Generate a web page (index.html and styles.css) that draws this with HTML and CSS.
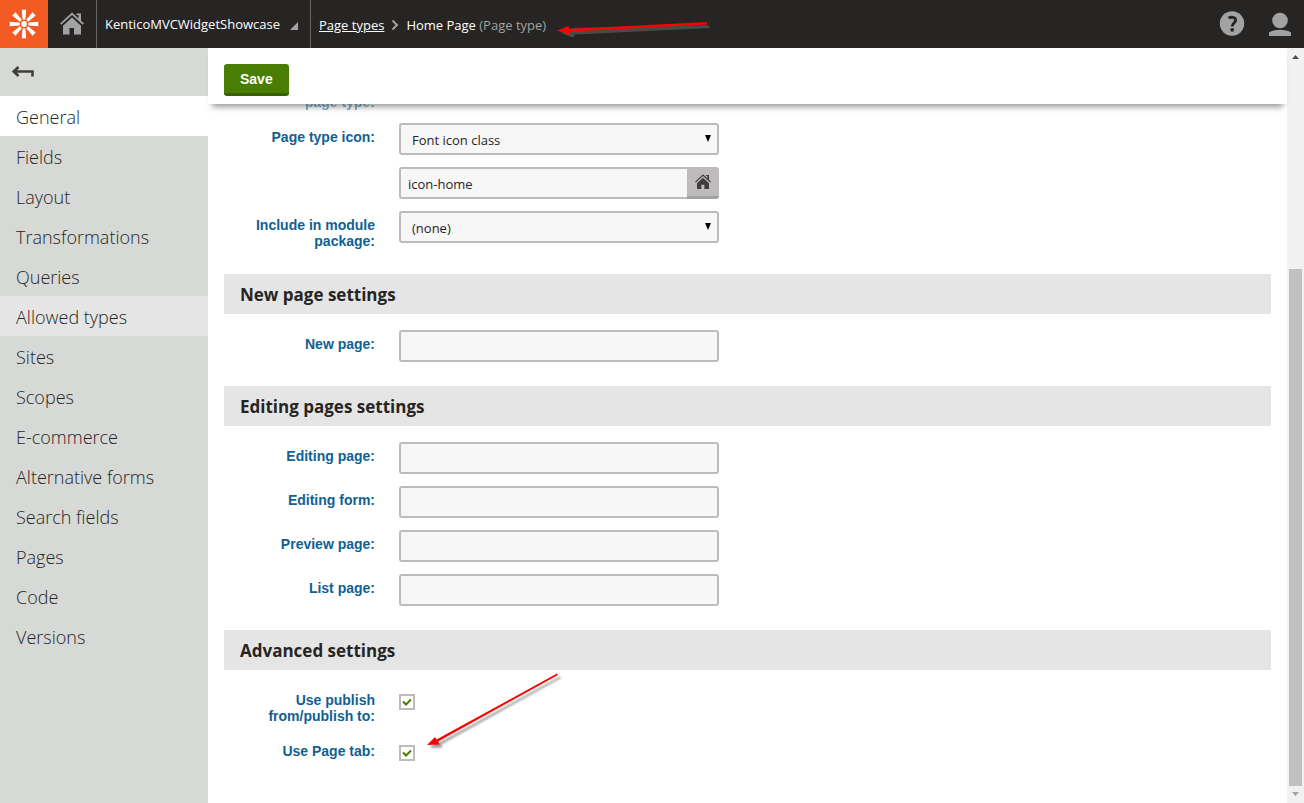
FILE: index.html
```html
<!DOCTYPE html>
<html lang="en">
<head>
    <meta charset="UTF-8">
    <meta name="viewport" content="width=device-width, initial-scale=1.0">
    <title>Home Page (Page type)</title>
    <link rel="stylesheet" href="styles.css">
</head>
<body>
<svg class="symbols">
    <symbol id="home" viewBox="0 0 24 24">
        <path d="M12 0.500 0 11.500 1.200 12.800 12 3 22.800 12.800 24 11.500 21 8.700V1.500H16.500V3H18.500V6.400Z"/>
        <path d="M12 5.500 3 13.800V22.500H9.500V16H14V22.500H21V13.800Z"/>
    </symbol>
</svg>

<header class="header">
    <a class="logo" href="#" aria-label="Kentico">
        <svg viewBox="0 0 48 48" width="48" height="48">
            <g fill="#fff">
                <path id="ray" d="M21.800 9.700h4.400l-.8 9.800h-2.800z"/>
                <use href="#ray" transform="rotate(45 24 24)"/>
                <use href="#ray" transform="rotate(90 24 24)"/>
                <use href="#ray" transform="rotate(135 24 24)"/>
                <use href="#ray" transform="rotate(180 24 24)"/>
                <use href="#ray" transform="rotate(225 24 24)"/>
                <use href="#ray" transform="rotate(270 24 24)"/>
                <use href="#ray" transform="rotate(315 24 24)"/>
            </g>
            <circle cx="24" cy="24" r="2.900" fill="#fff"/>
        </svg>
    </a>
    <a class="home" href="#" aria-label="Dashboard"><svg width="24" height="24"><use href="#home"/></svg></a>
    <button type="button" class="site">KenticoMVCWidgetShowcase
        <svg width="8" height="8" viewBox="0 0 8 8"><path d="M8 0V8H0Z" fill="#a3a2a2"/></svg>
    </button>
    <nav class="breadcrumbs">
        <a href="#">Page types</a>
        <svg width="8" height="12" viewBox="0 0 8 12"><path d="M1.500 1.500 6 6 1.500 10.500" fill="none" stroke="#a3a2a2" stroke-width="2"/></svg>
        <span>Home Page <span class="suffix">(Page type)</span></span>
    </nav>
    <div class="tools">
        <button type="button" class="tool" aria-label="Help">
            <svg width="26" height="26" viewBox="0 0 26 26">
                <circle cx="13" cy="12.500" r="12.200" fill="#a3a2a2"/>
                <path d="M9.600 7.200C11.500 5.800 16.600 5.600 16.600 9.200 16.600 12 13.200 12 13.200 15.500" fill="none" stroke="#262524" stroke-width="2.800"/>
                <circle cx="13.200" cy="18.800" r="1.900" fill="#262524"/>
            </svg>
        </button>
        <button type="button" class="tool" aria-label="User">
            <svg width="24" height="26" viewBox="0 0 24 26" fill="#a3a2a2">
                <circle cx="12" cy="9.500" r="7.800"/>
                <path d="M1 25V21.500C6 17.800 18 17.800 23 21.500V25Z"/>
            </svg>
        </button>
    </div>
</header>

<div class="page">
    <nav class="sidebar">
        <button type="button" class="back" aria-label="Back">
            <svg width="22" height="12" viewBox="0 0 22 12"><path d="M6.500 1 1.700 5.500 6.500 10M2 5.500H20.500V10.500" fill="none" stroke="#403e3d" stroke-width="2.600"/></svg>
        </button>
        <a class="item active" href="#">General</a>
        <a class="item" href="#">Fields</a>
        <a class="item" href="#">Layout</a>
        <a class="item" href="#">Transformations</a>
        <a class="item" href="#">Queries</a>
        <a class="item hover" href="#">Allowed types</a>
        <a class="item" href="#">Sites</a>
        <a class="item" href="#">Scopes</a>
        <a class="item" href="#">E-commerce</a>
        <a class="item" href="#">Alternative forms</a>
        <a class="item" href="#">Search fields</a>
        <a class="item" href="#">Pages</a>
        <a class="item" href="#">Code</a>
        <a class="item" href="#">Versions</a>
    </nav>

    <main class="main">
        <div class="toolbar"><button type="submit" form="typeForm" class="save">Save</button></div>
        <div class="content">
            <form id="typeForm" class="form">
                <div class="row"><span class="label under">page type:</span></div>
                <div class="row">
                    <label class="label" for="iconType">Page type icon:</label>
                    <div class="select">
                        <select id="iconType"><option>Font icon class</option></select>
                        <svg width="6" height="7" viewBox="0 0 6 7"><path d="M0 0H6L3 7Z"/></svg>
                    </div>
                </div>
                <div class="row">
                    <span class="label"></span>
                    <div class="group">
                        <input type="text" class="text" value="icon-home" aria-label="Icon class">
                        <button type="button" class="pick" aria-label="Select icon"><svg width="16" height="16"><use href="#home"/></svg></button>
                    </div>
                </div>
                <div class="row">
                    <label class="label" for="module">Include in module package:</label>
                    <div class="select">
                        <select id="module"><option>(none)</option></select>
                        <svg width="6" height="7" viewBox="0 0 6 7"><path d="M0 0H6L3 7Z"/></svg>
                    </div>
                </div>

                <h4 class="heading">New page settings</h4>
                <div class="row">
                    <label class="label" for="newPage">New page:</label>
                    <input type="text" class="text" id="newPage">
                </div>

                <h4 class="heading">Editing pages settings</h4>
                <div class="row">
                    <label class="label" for="editPage">Editing page:</label>
                    <input type="text" class="text" id="editPage">
                </div>
                <div class="row">
                    <label class="label" for="editForm">Editing form:</label>
                    <input type="text" class="text" id="editForm">
                </div>
                <div class="row">
                    <label class="label" for="preview">Preview page:</label>
                    <input type="text" class="text" id="preview">
                </div>
                <div class="row">
                    <label class="label" for="list">List page:</label>
                    <input type="text" class="text" id="list">
                </div>

                <h4 class="heading">Advanced settings</h4>
                <div class="row">
                    <label class="label" for="publish">Use publish from/publish to:</label>
                    <div class="check">
                        <input type="checkbox" id="publish" checked>
                        <svg viewBox="0 0 16 16"><path d="M4 7.500 7 10.500 12 5.500" fill="none" stroke="#497d04" stroke-width="2"/></svg>
                    </div>
                </div>
                <div class="row">
                    <label class="label" for="pageTab">Use Page tab:</label>
                    <div class="check">
                        <input type="checkbox" id="pageTab" checked>
                        <svg viewBox="0 0 16 16"><path d="M4 7.500 7 10.500 12 5.500" fill="none" stroke="#497d04" stroke-width="2"/></svg>
                    </div>
                </div>
            </form>
        </div>
    </main>

    <div class="scrollbar">
        <svg width="7" height="4" viewBox="0 0 7 4"><path d="M0 4 3.500 0 7 4Z" fill="#505050"/></svg>
        <div class="thumb"></div>
        <svg width="7" height="4" viewBox="0 0 7 4"><path d="M0 0 3.500 4 7 0Z" fill="#a3a3a3"/></svg>
    </div>
</div>

<!-- arrows pointing at the page type name and the Page tab option -->
<svg class="arrow arrow-title" width="160" height="24" viewBox="0 0 160 24">
    <path d="M5 14 16 9 152 6 154.500 9 19 15.500 17 18.500Z" fill="#4b4a49"/>
    <path d="M1 11.500 13 7V10L151 3V5.500L13 12.500V15.500Z" fill="#f00"/>
</svg>
<svg class="arrow arrow-tab" width="140" height="82" viewBox="0 0 140 82">
    <path d="M0 74 8 66 9.500 68.500 130 2.500 131 4 11 70.500 12.500 73.500Z" fill="#f00"/>
</svg>
</body>
</html>
```
FILE: styles.css
```css
body {
    margin: 0;
    height: 100vh;
    display: flex;
    flex-direction: column;
    overflow: hidden;
    background: #fff;
    color: #262524;
    font-family: "Open Sans", sans-serif;
    font-size: 13px;
}
* { box-sizing: border-box; }
svg { display: block; flex: none; }
button, input, select { font: inherit; color: inherit; }
button { border: none; padding: 0; background: none; cursor: pointer; }
.symbols { position: absolute; width: 0; height: 0; }

/* header */
.header {
    display: flex;
    flex: none;
    height: 48px;
    background: #262524;
    color: #fff;
}
.logo { background: #f15a22; }
.home {
    width: 48px;
    display: flex;
    align-items: center;
    justify-content: center;
    fill: #a3a2a2;
}
.site {
    display: flex;
    align-items: center;
    gap: 10px;
    padding: 0 12px 0 8px;
    border: solid #696663;
    border-width: 0 1px;
    color: #fff;
}
.site svg { margin-top: 4px; }
.breadcrumbs {
    display: flex;
    align-items: center;
    gap: 7px;
    padding: 2px 8px 0;
}
.breadcrumbs a { color: #fff; text-decoration: underline; }
.suffix { color: #a3a2a2; }
.tools { display: flex; margin-left: auto; }
.tool {
    width: 48px;
    display: flex;
    align-items: center;
    justify-content: center;
}

/* left menu */
.page { display: flex; flex: 1; min-height: 0; }
.sidebar {
    width: 208px;
    flex: none;
    background: #d6d9d6;
}
.back {
    display: flex;
    align-items: center;
    width: 100%;
    height: 48px;
    padding: 0 12px;
}
.item {
    display: block;
    height: 40px;
    padding: 1px 16px 0;
    line-height: 40px;
    font-size: 18px;
    font-weight: 300;
    color: #262524;
    text-decoration: none;
}
.item.active { background: #fff; }
.item.hover { background: #e5e5e5; }

/* content */
.main {
    flex: 1;
    min-width: 0;
    display: flex;
    flex-direction: column;
}
.toolbar {
    z-index: 1;
    height: 56px;
    flex: none;
    padding: 16px 16px 0;
    background: #fff;
    box-shadow: 0 7px 6px -4px rgba(0, 0, 0, 0.4);
}
.save {
    height: 32px;
    padding: 1px 16px 0;
    border-bottom: 3px solid #396103;
    border-radius: 3px;
    background: #497d04;
    color: #fff;
    font: bold 14px "Liberation Sans", Arial, sans-serif;
}
.content { flex: 1; min-height: 0; overflow: hidden; }
/* the form is scrolled down, its upper part is under the toolbar */
.form { margin-top: -16px; padding: 0 16px; }
.row { display: flex; gap: 24px; margin-bottom: 12px; }
.label {
    width: 151px;
    flex: none;
    padding: 6px 0 1px;
    color: #0f6194;
    font: bold 14px/16px "Liberation Sans", Arial, sans-serif;
    text-align: right;
}
.label.under { opacity: 0.5; }
.heading {
    height: 40px;
    margin: 24px 0 16px;
    padding: 1px 16px 0;
    background: #e5e5e5;
    font-size: 17px;
    line-height: 40px;
}
.text, .select select {
    width: 320px;
    height: 32px;
    padding: 2px 7px 0;
    border: 2px solid #bdbbbb;
    border-radius: 3px;
    background: #f7f7f7;
}
.select { position: relative; height: 32px; }
.select select { appearance: none; padding-left: 11px; }
.select svg { position: absolute; right: 8px; top: 12px; pointer-events: none; }
.group { display: flex; width: 320px; }
.group .text {
    flex: 1;
    min-width: 0;
    border-right: none;
    border-radius: 3px 0 0 3px;
}
.pick {
    width: 32px;
    display: flex;
    align-items: center;
    justify-content: center;
    border-bottom: 3px solid #a3a2a2;
    border-radius: 0 3px 3px 0;
    background: #bdbbbb;
    fill: #403e3d;
}
.check { position: relative; height: 16px; margin-top: 8px; }
.check input {
    appearance: none;
    display: block;
    width: 16px;
    height: 16px;
    margin: 0;
    border: 2px solid #bdbbbb;
    background: #fff;
}
.check svg { position: absolute; inset: 0; display: none; pointer-events: none; }
.check input:checked + svg { display: block; }

/* scrollbar */
.scrollbar {
    width: 17px;
    flex: none;
    display: flex;
    flex-direction: column;
    align-items: center;
    padding: 7px 0;
    background: #f1f1f1;
}
.thumb {
    width: 13px;
    flex: 1;
    margin: 210px 0 6px;
    background: #c1c1c1;
}

/* arrows */
.arrow { position: absolute; pointer-events: none; }
.arrow-title { left: 556px; top: 19px; }
.arrow-tab { left: 427px; top: 671px; filter: drop-shadow(3px 3px 1px rgba(0, 0, 0, 0.4)); }
```
